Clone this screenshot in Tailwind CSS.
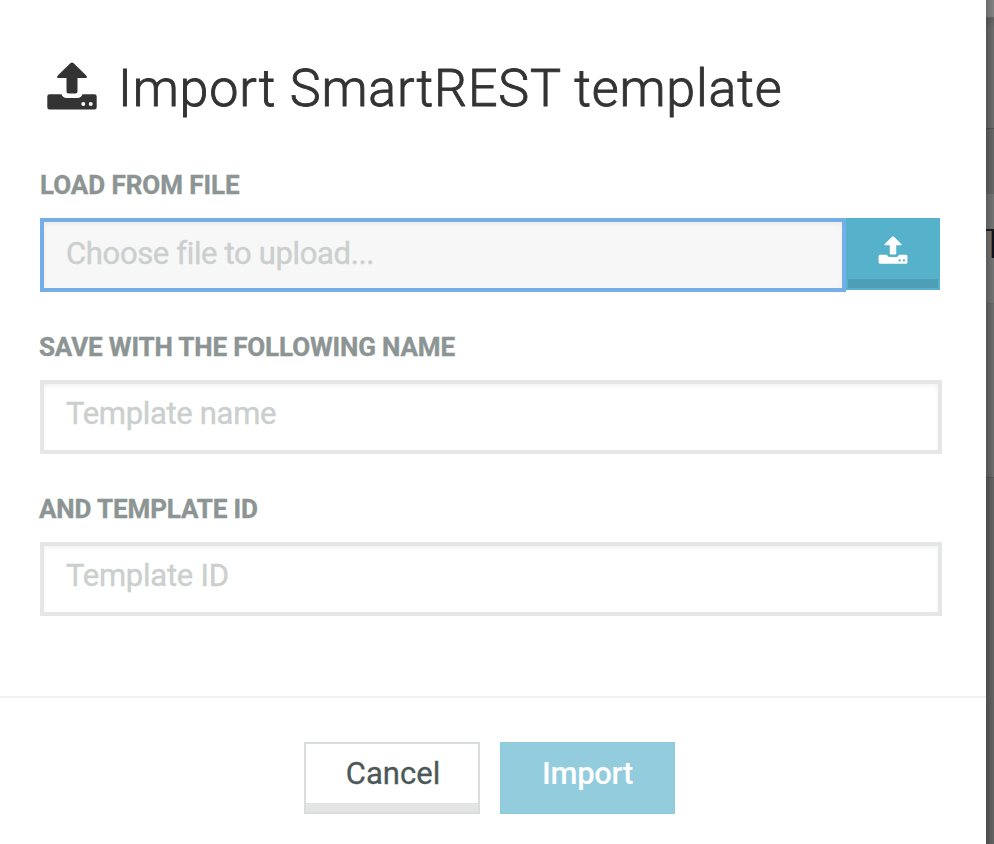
<!DOCTYPE html>
<html lang="en">
<head>
<meta charset="utf-8">
<title>Import SmartREST template</title>
<script src="https://cdn.jsdelivr.net/npm/@tailwindcss/browser@4"></script>
</head>
<body class="flex h-[844px] w-[994px] overflow-hidden bg-[#656565] font-['Roboto',sans-serif]">
<svg class="hidden">
  <symbol id="upload" viewBox="0 0 50 48">
    <path d="M23.3 1.2Q25 -.2 26.7 1.2L39.2 13.6Q40.8 16 38.4 16H30.5V29.5Q30.5 31.5 28.5 31.5H21.5Q19.5 31.5 19.5 29.5V16H11.6Q9.200 16 10.800 13.600Z"/>
    <path fill-rule="evenodd" d="M2.500 32.200H14.500Q16 36 19.500 36H30.500Q34 36 35.500 32.200H47.500Q49.700 32.200 49.700 34.500V45.200Q49.700 47.500 47.500 47.500H2.500Q.3 47.500 .3 45.200V34.500Q.3 32.200 2.500 32.200ZM36.300 39.900a2 2 0 1 0 0 4 2 2 0 0 0 0-4ZM43.700 39.900a2 2 0 1 0 0 4 2 2 0 0 0 0-4Z"/>
  </symbol>
</svg>
<main class="flex w-[986px] shrink-0 flex-col bg-white">
  <header class="flex h-[120px] pl-[47px] pt-14 text-[#333333]">
    <svg class="mt-1.5 h-12 w-[50px] fill-current"><use href="#upload"/></svg>
    <h1 class="pl-[21px] text-[52px] leading-[66px] font-light tracking-[0.8px] whitespace-nowrap [-webkit-text-stroke:0.9px_#333333]">Import SmartREST template</h1>
  </header>
  <form class="flex h-[576px] flex-col pl-10 pt-[49px]">
    <label class="mb-[17px] h-8 text-[26px] leading-8 font-bold tracking-[-0.05px] text-[#8c9594] [-webkit-text-stroke:0.4px_#8c9594]" for="file">LOAD FROM FILE</label>
    <div class="flex h-[74px]">
      <input id="file" placeholder="Choose file to upload..." class="h-[74px] w-[806px] border-4 border-[#75aee6] bg-[#f7f7f7] pb-1 pl-[22px] text-[31px] tracking-[-0.35px] shadow-[inset_0_2px_4px_rgba(0,0,0,0.05)] outline-none placeholder:text-[#cbcfce] [-webkit-text-stroke:0.4px_#cbcfce]">
      <button type="button" aria-label="Choose file" class="flex h-[72px] w-[94px] flex-col items-center bg-[#56b1cb] px-0.5 pb-0.5 pt-[18px] text-white">
        <svg class="mr-px h-[28px] w-[30px] fill-current"><use href="#upload"/></svg>
        <span class="mt-auto h-[9px] w-full bg-[#4d9eb6]"></span>
      </button>
    </div>
    <label class="-ml-px mt-[39px] mb-[17px] h-8 text-[26px] leading-8 font-bold tracking-[-0.15px] text-[#8c9594] [-webkit-text-stroke:0.4px_#8c9594]" for="name">SAVE WITH THE FOLLOWING NAME</label>
    <input id="name" placeholder="Template name" class="h-[74px] w-[902px] border-4 border-[#e4e7e6] bg-white pb-2 pl-[22px] text-[31px] tracking-[-0.32px] shadow-[inset_0_2px_4px_rgba(0,0,0,0.05)] outline-none placeholder:text-[#cbcfce] [-webkit-text-stroke:0.4px_#cbcfce]">
    <label class="-ml-px mt-[39px] mb-[17px] h-8 text-[26px] leading-8 font-bold tracking-[-0.12px] text-[#8c9594] [-webkit-text-stroke:0.4px_#8c9594]" for="tid">AND TEMPLATE ID</label>
    <input id="tid" placeholder="Template ID" class="h-[74px] w-[902px] border-4 border-[#e4e7e6] bg-white pb-2 pl-[22px] text-[31px] tracking-[-0.25px] shadow-[inset_0_2px_4px_rgba(0,0,0,0.05)] outline-none placeholder:text-[#cbcfce] [-webkit-text-stroke:0.4px_#cbcfce]">
  </form>
  <footer class="flex h-[148px] gap-5 border-t-2 border-[#f1f1f1] pl-[304px] pt-11 text-[31px] leading-[60px]">
    <button class="flex h-[72px] w-[176px] flex-col border-2 border-[#d9dedc] bg-white text-[#4b5858]">
      <span class="h-[59px] w-full pl-0.5 text-center [-webkit-text-stroke:0.3px_#4b5858]">Cancel</span>
      <span class="w-full flex-1 bg-[#e4e4e4]"></span>
    </button>
    <button class="h-[72px] w-[175px] border border-[#8fcadb] bg-[#93ccdd] pb-2 font-medium text-white tracking-[-0.3px]">Import</button>
  </footer>
</main>
<aside class="flex w-2 shrink-0 flex-col bg-linear-to-r from-[#535353] to-[#6d6d6d]">
  <div class="h-[18px] border-b border-black/20 bg-white/15"></div>
  <div class="h-[110px] bg-linear-to-b from-black/10 to-transparent to-10%"></div>
  <div class="h-[66px] border-t border-black/20 bg-black/5"></div>
  <div class="flex h-[110px] flex-col border-b border-black/10 bg-white/5 pt-[35px]">
    <div class="flex h-[29px] justify-end border-t-2 border-[#1b1b1b]"><span class="w-[3px] border-l border-[#60472f] bg-[#11121c]"></span></div>
  </div>
  <div class="h-[174px] border-b border-black/20"></div>
  <div class="flex-1 bg-black/8"></div>
</aside>
</body>
</html>
